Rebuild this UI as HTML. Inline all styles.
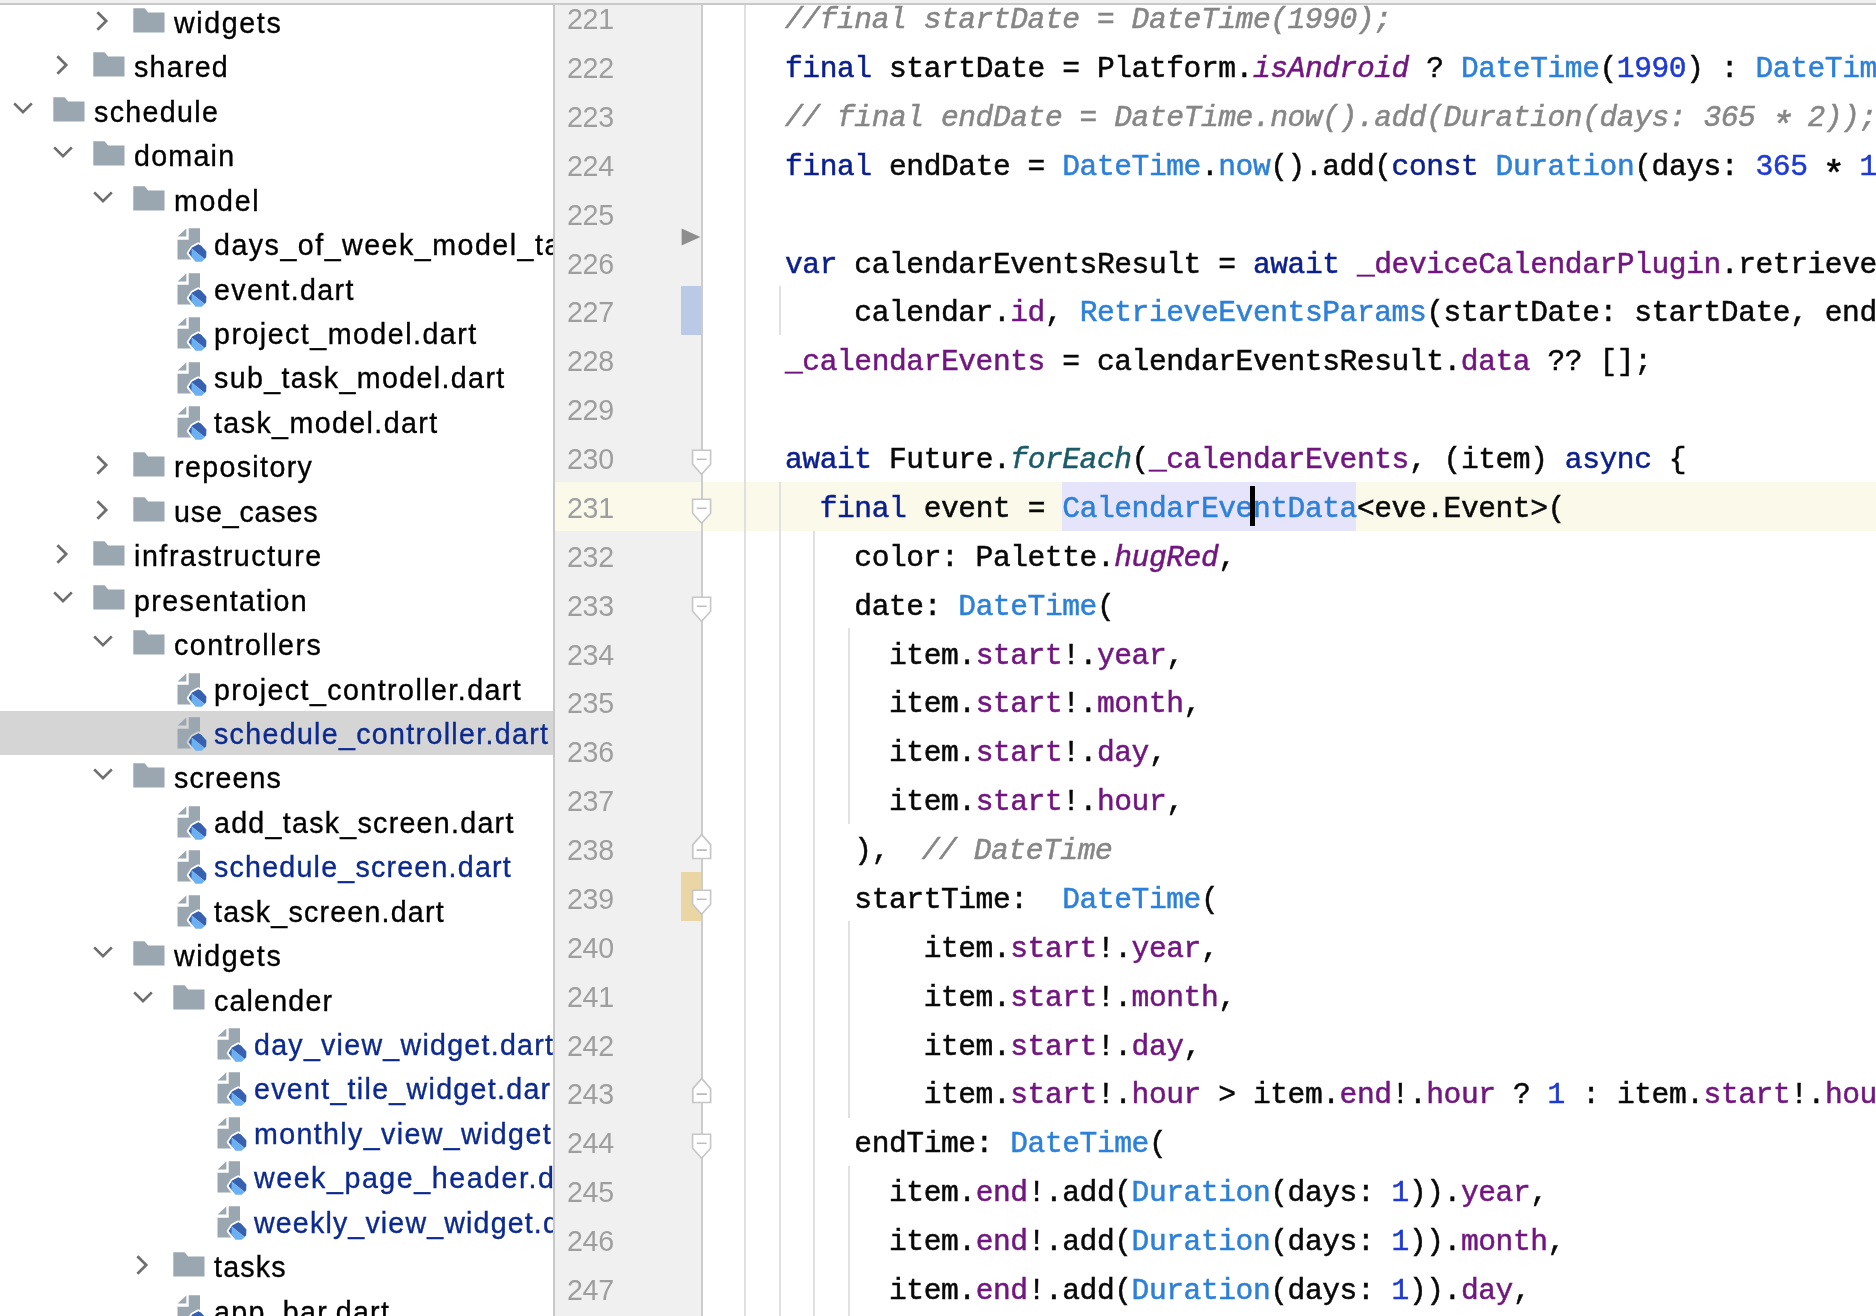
<!DOCTYPE html>
<html lang="en"><head><meta charset="utf-8"><title>schedule_controller.dart</title>
<style>
html,body{margin:0;padding:0;}
body{width:1876px;height:1316px;overflow:hidden;background:#ffffff;position:relative;font-family:"Liberation Sans",sans-serif;}
#tree{position:absolute;left:0;top:0;width:553px;height:1316px;overflow:hidden;background:#ffffff;}
#edit{position:absolute;left:0;top:0;width:1876px;height:1316px;overflow:hidden;clip-path:inset(0 0 0 553px);}
.ico{position:absolute;display:block;}
.sel{position:absolute;left:0;width:553px;height:44.43px;background:#d5d5d5;}
.tl{position:absolute;white-space:pre;will-change:transform;font-family:"Liberation Sans",sans-serif;font-size:28.60px;line-height:44px;height:44px;-webkit-text-stroke:0.35px currentColor;}
#split{position:absolute;left:553px;top:0;width:2px;height:1316px;background:#c8c8c8;}
#topband{position:absolute;left:0;top:0;width:1876px;height:3.4px;background:#f1f1f1;}
#topline{position:absolute;left:0;top:3.3px;width:1876px;height:2.1px;background:#c9c9c9;}
.gut{position:absolute;left:555px;top:0;width:147px;height:1316px;background:#f0f0f0;}
.gline{position:absolute;left:701px;top:0;width:2px;height:1316px;background:#cdcdcd;}
.fsep{position:absolute;left:744px;top:0;width:2px;height:1316px;background:#e0e0e0;}
.cur{position:absolute;left:703px;width:1200px;background:#fbfaea;}
.gcur{position:absolute;left:555px;width:146px;background:#fbfaea;}
.vcs{position:absolute;left:681px;width:20px;}
.ig{position:absolute;width:2px;background:#e1e1e1;}
.ln{position:absolute;left:566.5px;white-space:pre;will-change:transform;font-family:"Liberation Sans",sans-serif;font-size:28.60px;letter-spacing:-0.307px;line-height:48.88px;height:48.88px;color:#9e9e9e;}
.cl{position:absolute;left:784.5px;white-space:pre;will-change:transform;font-family:"Liberation Mono",monospace;font-size:29.60px;letter-spacing:-0.430px;line-height:48.88px;height:48.88px;color:#080808;-webkit-text-stroke:0.5px currentColor;}
.k{color:#0b1f8c;}
.c{color:#2d80d8;}
.n{color:#1f3ad2;}
.f{color:#71157f;}
.fi{color:#71157f;font-style:italic;}
.s{color:#1b5b68;font-style:italic;}
.m{color:#868686;font-style:italic;}
.hint{color:#868686;font-style:italic;margin-left:32.7px;}
.idhl{position:absolute;background:#e5e4fb;}
.ast{display:inline-block;transform:translateY(9.5px) scale(1.25);}
.caret{position:absolute;width:4.9px;height:40px;background:#000000;}
</style></head>
<body>
<div id="edit">
<div class="cur" style="top:482.2px;height:48.4px"></div>
<div class="idhl" style="left:1061.5px;top:482.2px;width:294.1px;height:48.4px"></div>
<div class="gut"></div>
<div class="gcur" style="top:482.2px;height:48.4px"></div>
<div class="gline"></div>
<div class="fsep"></div>
<div class="vcs" style="top:285.6px;height:49.6px;background:#b9c9e6"></div>
<div class="vcs" style="top:872px;height:49px;background:#ead6a5"></div>
<svg class="ico" style="left:680px;top:226px" width="22" height="22" viewBox="0 0 22 22"><path d="M1.6 2.6 L20.4 11.1 L1.6 19.6 Z" fill="#8e8e8e"/></svg>
<div class="ig" style="left:779.0px;top:285.5px;height:49.5px"></div>
<div class="ig" style="left:779.0px;top:482.2px;height:833.8px"></div>
<div class="ig" style="left:813.0px;top:531.3px;height:784.7px"></div>
<div class="ig" style="left:848.0px;top:628.0px;height:196.4px"></div>
<div class="ig" style="left:848.0px;top:921.3px;height:196.4px"></div>
<div class="ig" style="left:848.0px;top:1165.7px;height:150.3px"></div>
<svg class="ico" style="left:690px;top:448.0px" width="24" height="28" viewBox="0 0 24 28"><path d="M2.6 2.2 H20.6 V16.2 L11.6 26.2 L2.6 16.2 Z" fill="#ffffff" stroke="#c6c6c6" stroke-width="1.6"/><path d="M6.8 11.3 H16.6" stroke="#bdbdbd" stroke-width="1.5"/></svg>
<svg class="ico" style="left:690px;top:496.9px" width="24" height="28" viewBox="0 0 24 28"><path d="M2.6 2.2 H20.6 V16.2 L11.6 26.2 L2.6 16.2 Z" fill="#ffffff" stroke="#c6c6c6" stroke-width="1.6"/><path d="M6.8 11.3 H16.6" stroke="#bdbdbd" stroke-width="1.5"/></svg>
<svg class="ico" style="left:690px;top:594.7px" width="24" height="28" viewBox="0 0 24 28"><path d="M2.6 2.2 H20.6 V16.2 L11.6 26.2 L2.6 16.2 Z" fill="#ffffff" stroke="#c6c6c6" stroke-width="1.6"/><path d="M6.8 11.3 H16.6" stroke="#bdbdbd" stroke-width="1.5"/></svg>
<svg class="ico" style="left:690px;top:887.9px" width="24" height="28" viewBox="0 0 24 28"><path d="M2.6 2.2 H20.6 V16.2 L11.6 26.2 L2.6 16.2 Z" fill="#ffffff" stroke="#c6c6c6" stroke-width="1.6"/><path d="M6.8 11.3 H16.6" stroke="#bdbdbd" stroke-width="1.5"/></svg>
<svg class="ico" style="left:690px;top:1132.3px" width="24" height="28" viewBox="0 0 24 28"><path d="M2.6 2.2 H20.6 V16.2 L11.6 26.2 L2.6 16.2 Z" fill="#ffffff" stroke="#c6c6c6" stroke-width="1.6"/><path d="M6.8 11.3 H16.6" stroke="#bdbdbd" stroke-width="1.5"/></svg>
<svg class="ico" style="left:690px;top:833.0px" width="24" height="28" viewBox="0 0 24 28"><path d="M2.8 25.5 H20.6 V11.6 L11.7 1.6 L2.8 11.6 Z" fill="#ffffff" stroke="#c6c6c6" stroke-width="1.7"/><path d="M6.6 17.1 H16.8" stroke="#b4b4b4" stroke-width="1.6"/></svg>
<svg class="ico" style="left:690px;top:1077.4px" width="24" height="28" viewBox="0 0 24 28"><path d="M2.8 25.5 H20.6 V11.6 L11.7 1.6 L2.8 11.6 Z" fill="#ffffff" stroke="#c6c6c6" stroke-width="1.7"/><path d="M6.6 17.1 H16.8" stroke="#b4b4b4" stroke-width="1.6"/></svg>
<div class="ln" style="top:-4.9px">221</div>
<div class="ln" style="top:43.9px">222</div>
<div class="ln" style="top:92.8px">223</div>
<div class="ln" style="top:141.7px">224</div>
<div class="ln" style="top:190.6px">225</div>
<div class="ln" style="top:239.5px">226</div>
<div class="ln" style="top:288.3px">227</div>
<div class="ln" style="top:337.2px">228</div>
<div class="ln" style="top:386.1px">229</div>
<div class="ln" style="top:435.0px">230</div>
<div class="ln" style="top:483.9px">231</div>
<div class="ln" style="top:532.7px">232</div>
<div class="ln" style="top:581.6px">233</div>
<div class="ln" style="top:630.5px">234</div>
<div class="ln" style="top:679.4px">235</div>
<div class="ln" style="top:728.3px">236</div>
<div class="ln" style="top:777.1px">237</div>
<div class="ln" style="top:826.0px">238</div>
<div class="ln" style="top:874.9px">239</div>
<div class="ln" style="top:923.8px">240</div>
<div class="ln" style="top:972.7px">241</div>
<div class="ln" style="top:1021.5px">242</div>
<div class="ln" style="top:1070.4px">243</div>
<div class="ln" style="top:1119.3px">244</div>
<div class="ln" style="top:1168.2px">245</div>
<div class="ln" style="top:1217.1px">246</div>
<div class="ln" style="top:1265.9px">247</div>
<div class="cl" style="top:-3.9px"><span class="m">//final startDate = DateTime(1990);</span></div>
<div class="cl" style="top:44.9px"><span class="k">final</span> startDate = Platform.<span class="fi">isAndroid</span> ? <span class="c">DateTime</span>(<span class="n">1990</span>) : <span class="c">DateTime</span>(<span class="n">1970</span>);</div>
<div class="cl" style="top:93.8px"><span class="m">// final endDate = DateTime.now().add(Duration(days: 365 <span class="ast">*</span> 2));</span></div>
<div class="cl" style="top:142.7px"><span class="k">final</span> endDate = <span class="c">DateTime</span>.<span class="c">now</span>().add(<span class="k">const</span> <span class="c">Duration</span>(days: <span class="n">365</span> <span class="ast">*</span> <span class="n">10</span>));</div>
<div class="cl" style="top:240.5px"><span class="k">var</span> calendarEventsResult = <span class="k">await</span> <span class="f">_deviceCalendarPlugin</span>.retrieveEvents(</div>
<div class="cl" style="top:289.3px">    calendar.<span class="f">id</span>, <span class="c">RetrieveEventsParams</span>(startDate: startDate, endDate: endDate));</div>
<div class="cl" style="top:338.2px"><span class="f">_calendarEvents</span> = calendarEventsResult.<span class="f">data</span> ?? [];</div>
<div class="cl" style="top:436.0px"><span class="k">await</span> Future.<span class="s">forEach</span>(<span class="f">_calendarEvents</span>, (item) <span class="k">async</span> {</div>
<div class="cl" style="top:484.9px">  <span class="k">final</span> event = <span class="c">CalendarEventData</span>&lt;eve.Event&gt;(</div>
<div class="cl" style="top:533.7px">    color: Palette.<span class="fi">hugRed</span>,</div>
<div class="cl" style="top:582.6px">    date: <span class="c">DateTime</span>(</div>
<div class="cl" style="top:631.5px">      item.<span class="f">start</span>!.<span class="f">year</span>,</div>
<div class="cl" style="top:680.4px">      item.<span class="f">start</span>!.<span class="f">month</span>,</div>
<div class="cl" style="top:729.3px">      item.<span class="f">start</span>!.<span class="f">day</span>,</div>
<div class="cl" style="top:778.1px">      item.<span class="f">start</span>!.<span class="f">hour</span>,</div>
<div class="cl" style="top:827.0px">    ),<span class="hint">// DateTime</span></div>
<div class="cl" style="top:875.9px">    startTime:  <span class="c">DateTime</span>(</div>
<div class="cl" style="top:924.8px">        item.<span class="f">start</span>!.<span class="f">year</span>,</div>
<div class="cl" style="top:973.7px">        item.<span class="f">start</span>!.<span class="f">month</span>,</div>
<div class="cl" style="top:1022.5px">        item.<span class="f">start</span>!.<span class="f">day</span>,</div>
<div class="cl" style="top:1071.4px">        item.<span class="f">start</span>!.<span class="f">hour</span> &gt; item.<span class="f">end</span>!.<span class="f">hour</span> ? <span class="n">1</span> : item.<span class="f">start</span>!.<span class="f">hour</span> - item.<span class="f">end</span>!.<span class="f">hour</span>,</div>
<div class="cl" style="top:1120.3px">    endTime: <span class="c">DateTime</span>(</div>
<div class="cl" style="top:1169.2px">      item.<span class="f">end</span>!.add(<span class="c">Duration</span>(days: <span class="n">1</span>)).<span class="f">year</span>,</div>
<div class="cl" style="top:1218.1px">      item.<span class="f">end</span>!.add(<span class="c">Duration</span>(days: <span class="n">1</span>)).<span class="f">month</span>,</div>
<div class="cl" style="top:1266.9px">      item.<span class="f">end</span>!.add(<span class="c">Duration</span>(days: <span class="n">1</span>)).<span class="f">day</span>,</div>
<div class="caret" style="left:1250.1px;top:486.0px"></div>
</div>
<div id="tree">
<svg class="ico" style="left:93.7px;top:8.9px" width="16" height="24" viewBox="0 0 16 24"><path d="M3.4 3.2 L12.2 12 L3.4 20.8" fill="none" stroke="#6e6e6e" stroke-width="2.7"/></svg>
<svg class="ico" style="left:132.5px;top:7.8px" width="32" height="25" viewBox="0 0 32 25"><path d="M0.3 0.3 H11.6 L15.2 4.6 H31.5 V24.6 H0.3 Z" fill="#9aa7b0"/></svg>
<div class="tl" id="t0" style="left:174.0px;top:1.0px;color:#000000;letter-spacing:1.631px">widgets</div>
<svg class="ico" style="left:53.7px;top:53.3px" width="16" height="24" viewBox="0 0 16 24"><path d="M3.4 3.2 L12.2 12 L3.4 20.8" fill="none" stroke="#6e6e6e" stroke-width="2.7"/></svg>
<svg class="ico" style="left:92.5px;top:52.2px" width="32" height="25" viewBox="0 0 32 25"><path d="M0.3 0.3 H11.6 L15.2 4.6 H31.5 V24.6 H0.3 Z" fill="#9aa7b0"/></svg>
<div class="tl" id="t1" style="left:134.0px;top:45.4px;color:#000000;letter-spacing:1.260px">shared</div>
<svg class="ico" style="left:10.7px;top:100.0px" width="24" height="16" viewBox="0 0 24 16"><path d="M3.2 3.4 L12 12.2 L20.8 3.4" fill="none" stroke="#6e6e6e" stroke-width="2.7"/></svg>
<svg class="ico" style="left:52.5px;top:96.7px" width="32" height="25" viewBox="0 0 32 25"><path d="M0.3 0.3 H11.6 L15.2 4.6 H31.5 V24.6 H0.3 Z" fill="#9aa7b0"/></svg>
<div class="tl" id="t2" style="left:94.0px;top:89.9px;color:#000000;letter-spacing:1.332px">schedule</div>
<svg class="ico" style="left:50.7px;top:144.4px" width="24" height="16" viewBox="0 0 24 16"><path d="M3.2 3.4 L12 12.2 L20.8 3.4" fill="none" stroke="#6e6e6e" stroke-width="2.7"/></svg>
<svg class="ico" style="left:92.5px;top:141.1px" width="32" height="25" viewBox="0 0 32 25"><path d="M0.3 0.3 H11.6 L15.2 4.6 H31.5 V24.6 H0.3 Z" fill="#9aa7b0"/></svg>
<div class="tl" id="t3" style="left:134.0px;top:134.3px;color:#000000;letter-spacing:1.260px">domain</div>
<svg class="ico" style="left:90.7px;top:188.8px" width="24" height="16" viewBox="0 0 24 16"><path d="M3.2 3.4 L12 12.2 L20.8 3.4" fill="none" stroke="#6e6e6e" stroke-width="2.7"/></svg>
<svg class="ico" style="left:132.5px;top:185.5px" width="32" height="25" viewBox="0 0 32 25"><path d="M0.3 0.3 H11.6 L15.2 4.6 H31.5 V24.6 H0.3 Z" fill="#9aa7b0"/></svg>
<div class="tl" id="t4" style="left:174.0px;top:178.7px;color:#000000;letter-spacing:1.700px">model</div>
<svg class="ico" style="left:176.7px;top:228.2px" width="31" height="35" viewBox="0 0 31 35"><path d="M0.6 8.6 L9.3 0.4 V8.6 Z" fill="#9aa7b0"/><path d="M11.7 0.3 H23 V31.4 H0.5 V11.8 H11.7 Z" fill="#9aa7b0"/><path d="M11.6 25.1 L15.1 19.6 L21.3 16.2 L24 17.5 L29.4 23.5 L29.2 29.3 L27.7 31.1 L24.7 33.7 H18.6 L14.8 29.3 Z" fill="#ffffff" stroke="#ffffff" stroke-width="3.6" stroke-linejoin="round"/><path d="M11.6 25.1 L15.1 19.6 L21.3 16.2 L24 17.5 L29.4 23.5 L29.2 29.3 L27.7 31.1 L14.9 20.8 L14.8 29.3 Z" fill="#3761ae"/><path d="M14.9 20.8 L27.7 31.1 L24.7 33.7 H18.6 L14.8 29.3 Z" fill="#6bb0f3"/></svg>
<div class="tl" id="t5" style="left:214.0px;top:223.2px;color:#000000;letter-spacing:1.500px">days_of_week_model_task.dart</div>
<svg class="ico" style="left:176.7px;top:272.7px" width="31" height="35" viewBox="0 0 31 35"><path d="M0.6 8.6 L9.3 0.4 V8.6 Z" fill="#9aa7b0"/><path d="M11.7 0.3 H23 V31.4 H0.5 V11.8 H11.7 Z" fill="#9aa7b0"/><path d="M11.6 25.1 L15.1 19.6 L21.3 16.2 L24 17.5 L29.4 23.5 L29.2 29.3 L27.7 31.1 L24.7 33.7 H18.6 L14.8 29.3 Z" fill="#ffffff" stroke="#ffffff" stroke-width="3.6" stroke-linejoin="round"/><path d="M11.6 25.1 L15.1 19.6 L21.3 16.2 L24 17.5 L29.4 23.5 L29.2 29.3 L27.7 31.1 L14.9 20.8 L14.8 29.3 Z" fill="#3761ae"/><path d="M14.9 20.8 L27.7 31.1 L24.7 33.7 H18.6 L14.8 29.3 Z" fill="#6bb0f3"/></svg>
<div class="tl" id="t6" style="left:214.0px;top:267.6px;color:#000000;letter-spacing:1.365px">event.dart</div>
<svg class="ico" style="left:176.7px;top:317.1px" width="31" height="35" viewBox="0 0 31 35"><path d="M0.6 8.6 L9.3 0.4 V8.6 Z" fill="#9aa7b0"/><path d="M11.7 0.3 H23 V31.4 H0.5 V11.8 H11.7 Z" fill="#9aa7b0"/><path d="M11.6 25.1 L15.1 19.6 L21.3 16.2 L24 17.5 L29.4 23.5 L29.2 29.3 L27.7 31.1 L24.7 33.7 H18.6 L14.8 29.3 Z" fill="#ffffff" stroke="#ffffff" stroke-width="3.6" stroke-linejoin="round"/><path d="M11.6 25.1 L15.1 19.6 L21.3 16.2 L24 17.5 L29.4 23.5 L29.2 29.3 L27.7 31.1 L14.9 20.8 L14.8 29.3 Z" fill="#3761ae"/><path d="M14.9 20.8 L27.7 31.1 L24.7 33.7 H18.6 L14.8 29.3 Z" fill="#6bb0f3"/></svg>
<div class="tl" id="t7" style="left:214.0px;top:312.0px;color:#000000;letter-spacing:1.490px">project_model.dart</div>
<svg class="ico" style="left:176.7px;top:361.5px" width="31" height="35" viewBox="0 0 31 35"><path d="M0.6 8.6 L9.3 0.4 V8.6 Z" fill="#9aa7b0"/><path d="M11.7 0.3 H23 V31.4 H0.5 V11.8 H11.7 Z" fill="#9aa7b0"/><path d="M11.6 25.1 L15.1 19.6 L21.3 16.2 L24 17.5 L29.4 23.5 L29.2 29.3 L27.7 31.1 L24.7 33.7 H18.6 L14.8 29.3 Z" fill="#ffffff" stroke="#ffffff" stroke-width="3.6" stroke-linejoin="round"/><path d="M11.6 25.1 L15.1 19.6 L21.3 16.2 L24 17.5 L29.4 23.5 L29.2 29.3 L27.7 31.1 L14.9 20.8 L14.8 29.3 Z" fill="#3761ae"/><path d="M14.9 20.8 L27.7 31.1 L24.7 33.7 H18.6 L14.8 29.3 Z" fill="#6bb0f3"/></svg>
<div class="tl" id="t8" style="left:214.0px;top:356.4px;color:#000000;letter-spacing:1.377px">sub_task_model.dart</div>
<svg class="ico" style="left:176.7px;top:406.0px" width="31" height="35" viewBox="0 0 31 35"><path d="M0.6 8.6 L9.3 0.4 V8.6 Z" fill="#9aa7b0"/><path d="M11.7 0.3 H23 V31.4 H0.5 V11.8 H11.7 Z" fill="#9aa7b0"/><path d="M11.6 25.1 L15.1 19.6 L21.3 16.2 L24 17.5 L29.4 23.5 L29.2 29.3 L27.7 31.1 L24.7 33.7 H18.6 L14.8 29.3 Z" fill="#ffffff" stroke="#ffffff" stroke-width="3.6" stroke-linejoin="round"/><path d="M11.6 25.1 L15.1 19.6 L21.3 16.2 L24 17.5 L29.4 23.5 L29.2 29.3 L27.7 31.1 L14.9 20.8 L14.8 29.3 Z" fill="#3761ae"/><path d="M14.9 20.8 L27.7 31.1 L24.7 33.7 H18.6 L14.8 29.3 Z" fill="#6bb0f3"/></svg>
<div class="tl" id="t9" style="left:214.0px;top:400.9px;color:#000000;letter-spacing:1.412px">task_model.dart</div>
<svg class="ico" style="left:93.7px;top:453.2px" width="16" height="24" viewBox="0 0 16 24"><path d="M3.4 3.2 L12.2 12 L3.4 20.8" fill="none" stroke="#6e6e6e" stroke-width="2.7"/></svg>
<svg class="ico" style="left:132.5px;top:452.1px" width="32" height="25" viewBox="0 0 32 25"><path d="M0.3 0.3 H11.6 L15.2 4.6 H31.5 V24.6 H0.3 Z" fill="#9aa7b0"/></svg>
<div class="tl" id="t10" style="left:174.0px;top:445.3px;color:#000000;letter-spacing:1.365px">repository</div>
<svg class="ico" style="left:93.7px;top:497.6px" width="16" height="24" viewBox="0 0 16 24"><path d="M3.4 3.2 L12.2 12 L3.4 20.8" fill="none" stroke="#6e6e6e" stroke-width="2.7"/></svg>
<svg class="ico" style="left:132.5px;top:496.5px" width="32" height="25" viewBox="0 0 32 25"><path d="M0.3 0.3 H11.6 L15.2 4.6 H31.5 V24.6 H0.3 Z" fill="#9aa7b0"/></svg>
<div class="tl" id="t11" style="left:174.0px;top:489.7px;color:#000000;letter-spacing:0.850px">use_cases</div>
<svg class="ico" style="left:53.7px;top:542.1px" width="16" height="24" viewBox="0 0 16 24"><path d="M3.4 3.2 L12.2 12 L3.4 20.8" fill="none" stroke="#6e6e6e" stroke-width="2.7"/></svg>
<svg class="ico" style="left:92.5px;top:541.0px" width="32" height="25" viewBox="0 0 32 25"><path d="M0.3 0.3 H11.6 L15.2 4.6 H31.5 V24.6 H0.3 Z" fill="#9aa7b0"/></svg>
<div class="tl" id="t12" style="left:134.0px;top:534.2px;color:#000000;letter-spacing:1.559px">infrastructure</div>
<svg class="ico" style="left:50.7px;top:588.7px" width="24" height="16" viewBox="0 0 24 16"><path d="M3.2 3.4 L12 12.2 L20.8 3.4" fill="none" stroke="#6e6e6e" stroke-width="2.7"/></svg>
<svg class="ico" style="left:92.5px;top:585.4px" width="32" height="25" viewBox="0 0 32 25"><path d="M0.3 0.3 H11.6 L15.2 4.6 H31.5 V24.6 H0.3 Z" fill="#9aa7b0"/></svg>
<div class="tl" id="t13" style="left:134.0px;top:578.6px;color:#000000;letter-spacing:1.389px">presentation</div>
<svg class="ico" style="left:90.7px;top:633.1px" width="24" height="16" viewBox="0 0 24 16"><path d="M3.2 3.4 L12 12.2 L20.8 3.4" fill="none" stroke="#6e6e6e" stroke-width="2.7"/></svg>
<svg class="ico" style="left:132.5px;top:629.8px" width="32" height="25" viewBox="0 0 32 25"><path d="M0.3 0.3 H11.6 L15.2 4.6 H31.5 V24.6 H0.3 Z" fill="#9aa7b0"/></svg>
<div class="tl" id="t14" style="left:174.0px;top:623.0px;color:#000000;letter-spacing:1.480px">controllers</div>
<svg class="ico" style="left:176.7px;top:672.6px" width="31" height="35" viewBox="0 0 31 35"><path d="M0.6 8.6 L9.3 0.4 V8.6 Z" fill="#9aa7b0"/><path d="M11.7 0.3 H23 V31.4 H0.5 V11.8 H11.7 Z" fill="#9aa7b0"/><path d="M11.6 25.1 L15.1 19.6 L21.3 16.2 L24 17.5 L29.4 23.5 L29.2 29.3 L27.7 31.1 L24.7 33.7 H18.6 L14.8 29.3 Z" fill="#ffffff" stroke="#ffffff" stroke-width="3.6" stroke-linejoin="round"/><path d="M11.6 25.1 L15.1 19.6 L21.3 16.2 L24 17.5 L29.4 23.5 L29.2 29.3 L27.7 31.1 L14.9 20.8 L14.8 29.3 Z" fill="#3761ae"/><path d="M14.9 20.8 L27.7 31.1 L24.7 33.7 H18.6 L14.8 29.3 Z" fill="#6bb0f3"/></svg>
<div class="tl" id="t15" style="left:214.0px;top:667.5px;color:#000000;letter-spacing:1.445px">project_controller.dart</div>
<div class="sel" style="top:710.6px"></div>
<svg class="ico" style="left:176.7px;top:717.0px" width="31" height="35" viewBox="0 0 31 35"><path d="M0.6 8.6 L9.3 0.4 V8.6 Z" fill="#9aa7b0"/><path d="M11.7 0.3 H23 V31.4 H0.5 V11.8 H11.7 Z" fill="#9aa7b0"/><path d="M11.6 25.1 L15.1 19.6 L21.3 16.2 L24 17.5 L29.4 23.5 L29.2 29.3 L27.7 31.1 L24.7 33.7 H18.6 L14.8 29.3 Z" fill="#d5d5d5" stroke="#d5d5d5" stroke-width="3.6" stroke-linejoin="round"/><path d="M11.6 25.1 L15.1 19.6 L21.3 16.2 L24 17.5 L29.4 23.5 L29.2 29.3 L27.7 31.1 L14.9 20.8 L14.8 29.3 Z" fill="#3761ae"/><path d="M14.9 20.8 L27.7 31.1 L24.7 33.7 H18.6 L14.8 29.3 Z" fill="#6bb0f3"/></svg>
<div class="tl" id="t16" style="left:214.0px;top:711.9px;color:#0c2a8e;letter-spacing:1.320px">schedule_controller.dart</div>
<svg class="ico" style="left:90.7px;top:766.4px" width="24" height="16" viewBox="0 0 24 16"><path d="M3.2 3.4 L12 12.2 L20.8 3.4" fill="none" stroke="#6e6e6e" stroke-width="2.7"/></svg>
<svg class="ico" style="left:132.5px;top:763.1px" width="32" height="25" viewBox="0 0 32 25"><path d="M0.3 0.3 H11.6 L15.2 4.6 H31.5 V24.6 H0.3 Z" fill="#9aa7b0"/></svg>
<div class="tl" id="t17" style="left:174.0px;top:756.3px;color:#000000;letter-spacing:1.131px">screens</div>
<svg class="ico" style="left:176.7px;top:805.8px" width="31" height="35" viewBox="0 0 31 35"><path d="M0.6 8.6 L9.3 0.4 V8.6 Z" fill="#9aa7b0"/><path d="M11.7 0.3 H23 V31.4 H0.5 V11.8 H11.7 Z" fill="#9aa7b0"/><path d="M11.6 25.1 L15.1 19.6 L21.3 16.2 L24 17.5 L29.4 23.5 L29.2 29.3 L27.7 31.1 L24.7 33.7 H18.6 L14.8 29.3 Z" fill="#ffffff" stroke="#ffffff" stroke-width="3.6" stroke-linejoin="round"/><path d="M11.6 25.1 L15.1 19.6 L21.3 16.2 L24 17.5 L29.4 23.5 L29.2 29.3 L27.7 31.1 L14.9 20.8 L14.8 29.3 Z" fill="#3761ae"/><path d="M14.9 20.8 L27.7 31.1 L24.7 33.7 H18.6 L14.8 29.3 Z" fill="#6bb0f3"/></svg>
<div class="tl" id="t18" style="left:214.0px;top:800.7px;color:#000000;letter-spacing:1.281px">add_task_screen.dart</div>
<svg class="ico" style="left:176.7px;top:850.3px" width="31" height="35" viewBox="0 0 31 35"><path d="M0.6 8.6 L9.3 0.4 V8.6 Z" fill="#9aa7b0"/><path d="M11.7 0.3 H23 V31.4 H0.5 V11.8 H11.7 Z" fill="#9aa7b0"/><path d="M11.6 25.1 L15.1 19.6 L21.3 16.2 L24 17.5 L29.4 23.5 L29.2 29.3 L27.7 31.1 L24.7 33.7 H18.6 L14.8 29.3 Z" fill="#ffffff" stroke="#ffffff" stroke-width="3.6" stroke-linejoin="round"/><path d="M11.6 25.1 L15.1 19.6 L21.3 16.2 L24 17.5 L29.4 23.5 L29.2 29.3 L27.7 31.1 L14.9 20.8 L14.8 29.3 Z" fill="#3761ae"/><path d="M14.9 20.8 L27.7 31.1 L24.7 33.7 H18.6 L14.8 29.3 Z" fill="#6bb0f3"/></svg>
<div class="tl" id="t19" style="left:214.0px;top:845.2px;color:#0c2a8e;letter-spacing:1.229px">schedule_screen.dart</div>
<svg class="ico" style="left:176.7px;top:894.7px" width="31" height="35" viewBox="0 0 31 35"><path d="M0.6 8.6 L9.3 0.4 V8.6 Z" fill="#9aa7b0"/><path d="M11.7 0.3 H23 V31.4 H0.5 V11.8 H11.7 Z" fill="#9aa7b0"/><path d="M11.6 25.1 L15.1 19.6 L21.3 16.2 L24 17.5 L29.4 23.5 L29.2 29.3 L27.7 31.1 L24.7 33.7 H18.6 L14.8 29.3 Z" fill="#ffffff" stroke="#ffffff" stroke-width="3.6" stroke-linejoin="round"/><path d="M11.6 25.1 L15.1 19.6 L21.3 16.2 L24 17.5 L29.4 23.5 L29.2 29.3 L27.7 31.1 L14.9 20.8 L14.8 29.3 Z" fill="#3761ae"/><path d="M14.9 20.8 L27.7 31.1 L24.7 33.7 H18.6 L14.8 29.3 Z" fill="#6bb0f3"/></svg>
<div class="tl" id="t20" style="left:214.0px;top:889.6px;color:#000000;letter-spacing:1.219px">task_screen.dart</div>
<svg class="ico" style="left:90.7px;top:944.1px" width="24" height="16" viewBox="0 0 24 16"><path d="M3.2 3.4 L12 12.2 L20.8 3.4" fill="none" stroke="#6e6e6e" stroke-width="2.7"/></svg>
<svg class="ico" style="left:132.5px;top:940.8px" width="32" height="25" viewBox="0 0 32 25"><path d="M0.3 0.3 H11.6 L15.2 4.6 H31.5 V24.6 H0.3 Z" fill="#9aa7b0"/></svg>
<div class="tl" id="t21" style="left:174.0px;top:934.0px;color:#000000;letter-spacing:1.631px">widgets</div>
<svg class="ico" style="left:130.7px;top:988.6px" width="24" height="16" viewBox="0 0 24 16"><path d="M3.2 3.4 L12 12.2 L20.8 3.4" fill="none" stroke="#6e6e6e" stroke-width="2.7"/></svg>
<svg class="ico" style="left:172.5px;top:985.3px" width="32" height="25" viewBox="0 0 32 25"><path d="M0.3 0.3 H11.6 L15.2 4.6 H31.5 V24.6 H0.3 Z" fill="#9aa7b0"/></svg>
<div class="tl" id="t22" style="left:214.0px;top:978.5px;color:#000000;letter-spacing:1.189px">calender</div>
<svg class="ico" style="left:216.7px;top:1028.0px" width="31" height="35" viewBox="0 0 31 35"><path d="M0.6 8.6 L9.3 0.4 V8.6 Z" fill="#9aa7b0"/><path d="M11.7 0.3 H23 V31.4 H0.5 V11.8 H11.7 Z" fill="#9aa7b0"/><path d="M11.6 25.1 L15.1 19.6 L21.3 16.2 L24 17.5 L29.4 23.5 L29.2 29.3 L27.7 31.1 L24.7 33.7 H18.6 L14.8 29.3 Z" fill="#ffffff" stroke="#ffffff" stroke-width="3.6" stroke-linejoin="round"/><path d="M11.6 25.1 L15.1 19.6 L21.3 16.2 L24 17.5 L29.4 23.5 L29.2 29.3 L27.7 31.1 L14.9 20.8 L14.8 29.3 Z" fill="#3761ae"/><path d="M14.9 20.8 L27.7 31.1 L24.7 33.7 H18.6 L14.8 29.3 Z" fill="#6bb0f3"/></svg>
<div class="tl" id="t23" style="left:254.0px;top:1022.9px;color:#0c2a8e;letter-spacing:1.262px">day_view_widget.dart</div>
<svg class="ico" style="left:216.7px;top:1072.4px" width="31" height="35" viewBox="0 0 31 35"><path d="M0.6 8.6 L9.3 0.4 V8.6 Z" fill="#9aa7b0"/><path d="M11.7 0.3 H23 V31.4 H0.5 V11.8 H11.7 Z" fill="#9aa7b0"/><path d="M11.6 25.1 L15.1 19.6 L21.3 16.2 L24 17.5 L29.4 23.5 L29.2 29.3 L27.7 31.1 L24.7 33.7 H18.6 L14.8 29.3 Z" fill="#ffffff" stroke="#ffffff" stroke-width="3.6" stroke-linejoin="round"/><path d="M11.6 25.1 L15.1 19.6 L21.3 16.2 L24 17.5 L29.4 23.5 L29.2 29.3 L27.7 31.1 L14.9 20.8 L14.8 29.3 Z" fill="#3761ae"/><path d="M14.9 20.8 L27.7 31.1 L24.7 33.7 H18.6 L14.8 29.3 Z" fill="#6bb0f3"/></svg>
<div class="tl" id="t24" style="left:254.0px;top:1067.3px;color:#0c2a8e;letter-spacing:1.295px">event_tile_widget.dar</div>
<svg class="ico" style="left:216.7px;top:1116.8px" width="31" height="35" viewBox="0 0 31 35"><path d="M0.6 8.6 L9.3 0.4 V8.6 Z" fill="#9aa7b0"/><path d="M11.7 0.3 H23 V31.4 H0.5 V11.8 H11.7 Z" fill="#9aa7b0"/><path d="M11.6 25.1 L15.1 19.6 L21.3 16.2 L24 17.5 L29.4 23.5 L29.2 29.3 L27.7 31.1 L24.7 33.7 H18.6 L14.8 29.3 Z" fill="#ffffff" stroke="#ffffff" stroke-width="3.6" stroke-linejoin="round"/><path d="M11.6 25.1 L15.1 19.6 L21.3 16.2 L24 17.5 L29.4 23.5 L29.2 29.3 L27.7 31.1 L14.9 20.8 L14.8 29.3 Z" fill="#3761ae"/><path d="M14.9 20.8 L27.7 31.1 L24.7 33.7 H18.6 L14.8 29.3 Z" fill="#6bb0f3"/></svg>
<div class="tl" id="t25" style="left:254.0px;top:1111.8px;color:#0c2a8e;letter-spacing:1.379px">monthly_view_widget</div>
<svg class="ico" style="left:216.7px;top:1161.3px" width="31" height="35" viewBox="0 0 31 35"><path d="M0.6 8.6 L9.3 0.4 V8.6 Z" fill="#9aa7b0"/><path d="M11.7 0.3 H23 V31.4 H0.5 V11.8 H11.7 Z" fill="#9aa7b0"/><path d="M11.6 25.1 L15.1 19.6 L21.3 16.2 L24 17.5 L29.4 23.5 L29.2 29.3 L27.7 31.1 L24.7 33.7 H18.6 L14.8 29.3 Z" fill="#ffffff" stroke="#ffffff" stroke-width="3.6" stroke-linejoin="round"/><path d="M11.6 25.1 L15.1 19.6 L21.3 16.2 L24 17.5 L29.4 23.5 L29.2 29.3 L27.7 31.1 L14.9 20.8 L14.8 29.3 Z" fill="#3761ae"/><path d="M14.9 20.8 L27.7 31.1 L24.7 33.7 H18.6 L14.8 29.3 Z" fill="#6bb0f3"/></svg>
<div class="tl" id="t26" style="left:254.0px;top:1156.2px;color:#0c2a8e;letter-spacing:1.556px">week_page_header.dart</div>
<svg class="ico" style="left:216.7px;top:1205.7px" width="31" height="35" viewBox="0 0 31 35"><path d="M0.6 8.6 L9.3 0.4 V8.6 Z" fill="#9aa7b0"/><path d="M11.7 0.3 H23 V31.4 H0.5 V11.8 H11.7 Z" fill="#9aa7b0"/><path d="M11.6 25.1 L15.1 19.6 L21.3 16.2 L24 17.5 L29.4 23.5 L29.2 29.3 L27.7 31.1 L24.7 33.7 H18.6 L14.8 29.3 Z" fill="#ffffff" stroke="#ffffff" stroke-width="3.6" stroke-linejoin="round"/><path d="M11.6 25.1 L15.1 19.6 L21.3 16.2 L24 17.5 L29.4 23.5 L29.2 29.3 L27.7 31.1 L14.9 20.8 L14.8 29.3 Z" fill="#3761ae"/><path d="M14.9 20.8 L27.7 31.1 L24.7 33.7 H18.6 L14.8 29.3 Z" fill="#6bb0f3"/></svg>
<div class="tl" id="t27" style="left:254.0px;top:1200.6px;color:#0c2a8e;letter-spacing:1.156px">weekly_view_widget.dart</div>
<svg class="ico" style="left:133.7px;top:1252.9px" width="16" height="24" viewBox="0 0 16 24"><path d="M3.4 3.2 L12.2 12 L3.4 20.8" fill="none" stroke="#6e6e6e" stroke-width="2.7"/></svg>
<svg class="ico" style="left:172.5px;top:1251.8px" width="32" height="25" viewBox="0 0 32 25"><path d="M0.3 0.3 H11.6 L15.2 4.6 H31.5 V24.6 H0.3 Z" fill="#9aa7b0"/></svg>
<div class="tl" id="t28" style="left:214.0px;top:1245.0px;color:#000000;letter-spacing:1.200px">tasks</div>
<svg class="ico" style="left:176.7px;top:1294.6px" width="31" height="35" viewBox="0 0 31 35"><path d="M0.6 8.6 L9.3 0.4 V8.6 Z" fill="#9aa7b0"/><path d="M11.7 0.3 H23 V31.4 H0.5 V11.8 H11.7 Z" fill="#9aa7b0"/><path d="M11.6 25.1 L15.1 19.6 L21.3 16.2 L24 17.5 L29.4 23.5 L29.2 29.3 L27.7 31.1 L24.7 33.7 H18.6 L14.8 29.3 Z" fill="#ffffff" stroke="#ffffff" stroke-width="3.6" stroke-linejoin="round"/><path d="M11.6 25.1 L15.1 19.6 L21.3 16.2 L24 17.5 L29.4 23.5 L29.2 29.3 L27.7 31.1 L14.9 20.8 L14.8 29.3 Z" fill="#3761ae"/><path d="M14.9 20.8 L27.7 31.1 L24.7 33.7 H18.6 L14.8 29.3 Z" fill="#6bb0f3"/></svg>
<div class="tl" id="t29" style="left:214.0px;top:1289.5px;color:#000000;letter-spacing:1.298px">app_bar.dart</div>
</div>
<div id="split"></div>
<div id="topband"></div><div id="topline"></div>
</body></html>
